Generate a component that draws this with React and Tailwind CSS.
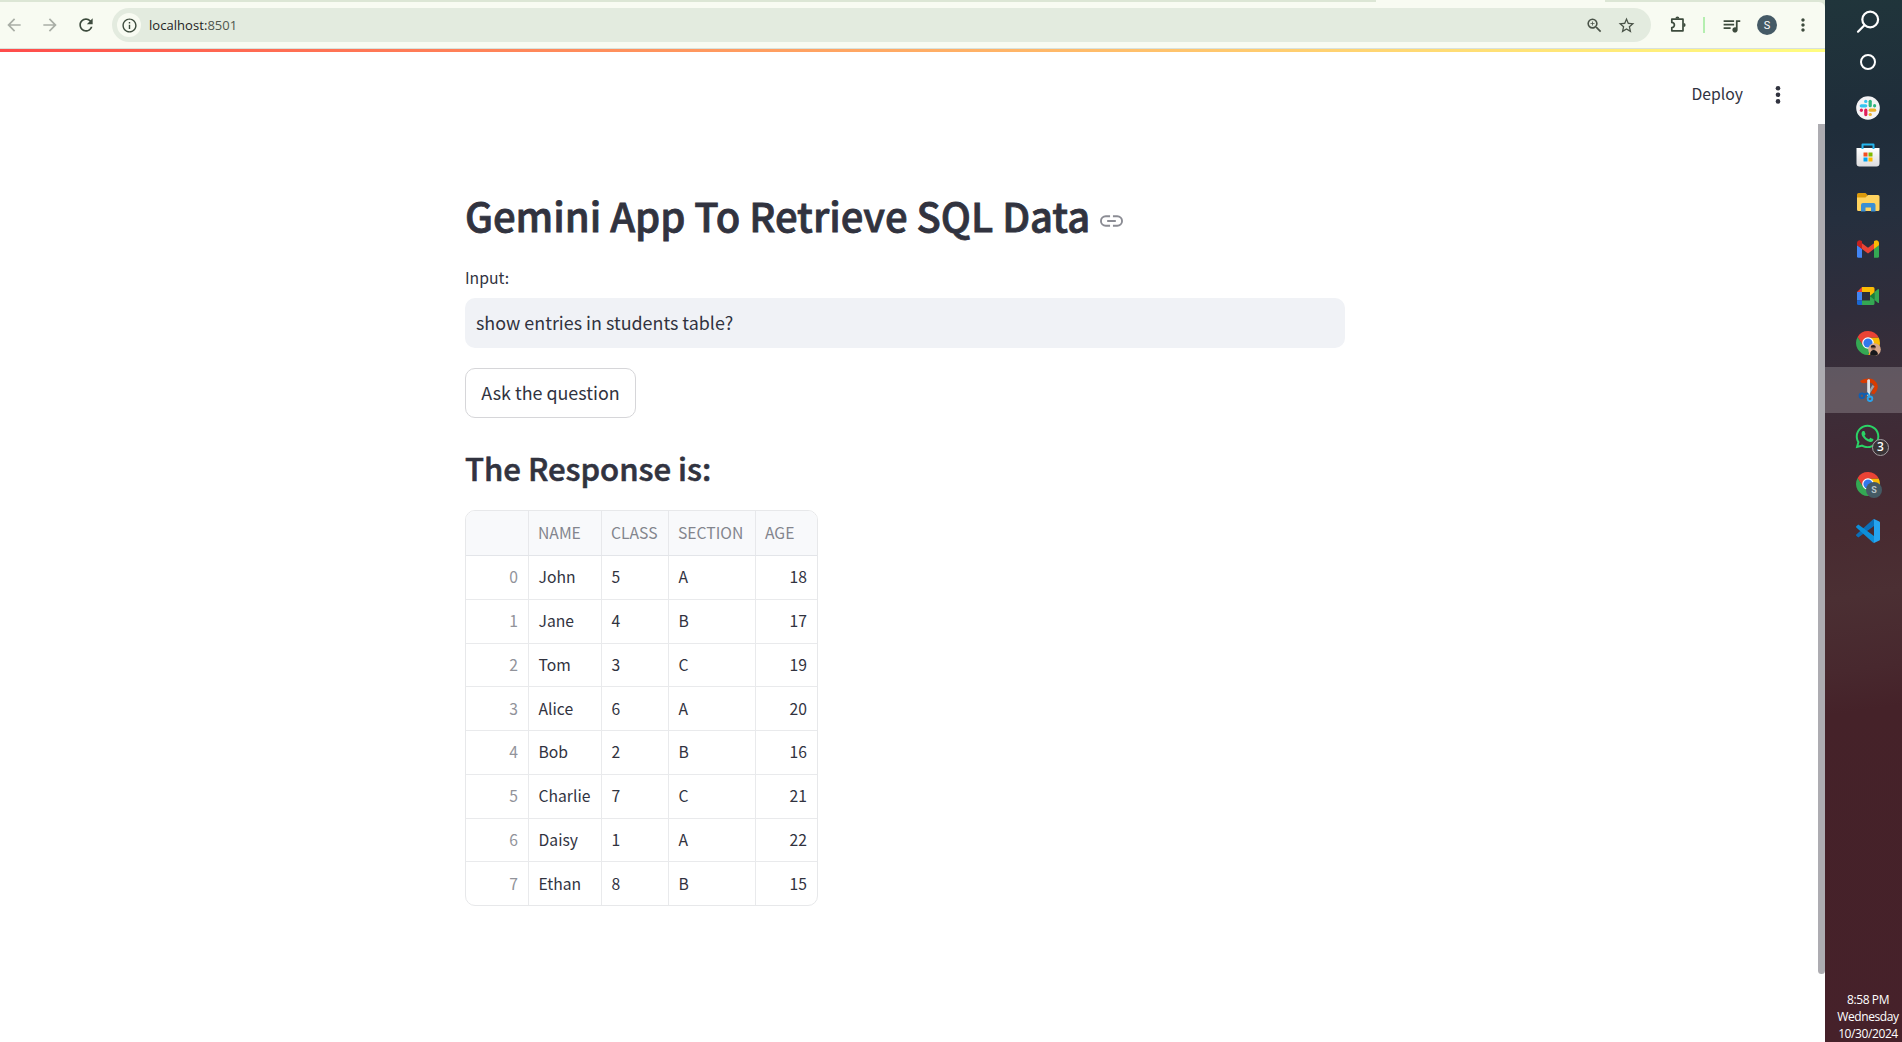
import {
  MdArrowBack,
  MdArrowForward,
  MdRefresh,
  MdInfoOutline,
  MdZoomIn,
  MdStarOutline,
  MdQueueMusic,
  MdMoreVert,
} from "react-icons/md";
import { FaWhatsapp } from "react-icons/fa";

const rows = [
  ["John", "5", "A", "18"],
  ["Jane", "4", "B", "17"],
  ["Tom", "3", "C", "19"],
  ["Alice", "6", "A", "20"],
  ["Bob", "2", "B", "16"],
  ["Charlie", "7", "C", "21"],
  ["Daisy", "1", "A", "22"],
  ["Ethan", "8", "B", "15"],
];

function Puzzle() {
  return (
    <svg className="ml-[17px] size-5" viewBox="0 0 20 20">
      <path
        d="M3.800 4.200H15V15.800H3.800V12.600a2.600 2.600 0 0 0 0-5.200z"
        fill="none"
        stroke="#3d4b3d"
        strokeWidth="1.700"
        strokeLinejoin="round"
      />
      <path d="M7.400 3.600a2 2 0 0 1 4 0zM15.600 8a2 2 0 0 1 0 4z" fill="#3d4b3d" />
    </svg>
  );
}

function BrowserBar() {
  return (
    <header className="h-[49px] shrink-0 bg-[#dce6d5] flex flex-col font-['Open_Sans',sans-serif]">
      <div className="h-[2px] flex justify-end pr-[220px]">
        <div className="w-[229px] bg-[#f8fbf2]" />
      </div>
      <div className="h-[46px] flex items-center bg-[#f8fbf2] rounded-tr-[6px] text-[#3d4b3d]">
        <div className="flex w-[112px] gap-4 pl-1">
          <MdArrowBack size={20} className="text-[#a9aea6]" />
          <MdArrowForward size={20} className="text-[#a9aea6]" />
          <MdRefresh size={20} />
        </div>
        <div className="h-[34px] w-[1539px] rounded-full bg-[#e3ebdf] flex items-center pl-[5px] pr-[15px]">
          <div className="size-6 rounded-full bg-[#f8fbf2] flex items-center justify-center">
            <MdInfoOutline size={17} />
          </div>
          <span className="ml-2 text-[13px] leading-[18px] tracking-[0.05px] text-[#1d221d]">
            localhost:<span className="text-[#4f574e]">8501</span>
          </span>
          <div className="ml-auto flex items-center gap-[13px]">
            <MdZoomIn size={19} className="text-[#4a5348]" />
            <MdStarOutline size={19} className="text-[#4a5348]" />
          </div>
        </div>
        <Puzzle />
        <div className="ml-[15px] h-4 w-[2px] bg-[#b5efb0]" />
        <MdQueueMusic size={21} className="ml-[16px]" />
        <div className="ml-[15px] size-5 rounded-full bg-[#455a66] text-white text-[11px] leading-none flex items-center justify-center font-['Roboto',sans-serif]">
          S
        </div>
        <MdMoreVert size={20} className="ml-4" />
      </div>
      <div className="h-px bg-[#d8e1dc]" />
    </header>
  );
}

function LinkIcon() {
  return (
    <svg className="ml-[10px] mt-[11px] h-[12px] w-[23px]" viewBox="0 0 24 12" fill="none" stroke="#8b8c94" strokeWidth="2" strokeLinecap="butt">
      <path d="M10.500 1H6a5 5 0 0 0 0 10h4.500M13.500 1H18a5 5 0 0 1 0 10h-4.500M7.500 6h9" />
    </svg>
  );
}

function DataTable() {
  const cols = "grid grid-cols-[63px_73px_67px_87px_61px]";
  return (
    <div className="mt-[20px] w-[353px] h-[396px] rounded-[10px] border border-[#e7e8ea] overflow-hidden text-[15.7px] leading-[22px] text-[#31333f]">
      <div className={cols + " h-[45px] bg-[#f8f9fb] border-b border-[#e3e5e9] text-[#83858d]"}>
        {["", "NAME", "CLASS", "SECTION", "AGE"].map((h, i) => (
          <div key={h} className={"flex items-center pl-[9px] pb-px whitespace-nowrap" + (i < 4 ? " border-r border-[#e7e8eb]" : "")}>
            {h}
          </div>
        ))}
      </div>
      {rows.map((r, i) => (
        <div key={r[0]} className={cols + " h-[43.75px] border-b border-[#e9eaec]"}>
          <div className="flex items-center justify-end pr-[10px] pb-[0.2px] border-r border-[#e9eaec] text-[#91939a]">{i}</div>
          {r.map((c, j) => (
            <div
              key={j}
              className={
                j === 3
                  ? "flex items-center justify-end pr-[10px] pb-[0.2px]"
                  : "flex items-center pl-[9.5px] pb-[0.2px] border-r border-[#e9eaec]"
              }
            >
              {c}
            </div>
          ))}
        </div>
      ))}
    </div>
  );
}

function Page() {
  return (
    <main className="relative flex-1 bg-white font-['Noto_Sans_CJK_SC',sans-serif] text-[#31333f]">
      <div className="h-[3px] bg-linear-to-r from-[#ff4b4b] to-[#fffd80]" />
      <div className="flex h-[84px] items-center justify-end pr-[40px]">
        <span className="text-[15.75px] leading-6">Deploy</span>
        <svg className="ml-[28px] mt-[2px] h-5 w-[14px]" viewBox="0 0 14 20" fill="#31333f">
          <circle cx="7" cy="3.200" r="2.300" />
          <circle cx="7" cy="9.800" r="2.300" />
          <circle cx="7" cy="16.400" r="2.300" />
        </svg>
      </div>
      <div className="ml-[465px] w-[880px] pt-[49px]">
        <div className="flex items-center h-[60px]">
          <h1 className="text-[40px] leading-[60px] font-medium [-webkit-text-stroke:0.8px_#31333f] tracking-[-0.03px] whitespace-nowrap">
            Gemini App To Retrieve SQL Data
          </h1>
          <LinkIcon />
        </div>
        <label className="mt-[21px] block text-[15.75px] leading-[24px]">Input:</label>
        <div className="mt-[8px] h-[50px] rounded-[10px] bg-[#f0f2f6] flex items-center px-[11px] pb-[3px] text-[17.9px] leading-7">
          show entries in students table?
        </div>
        <button className="mt-5 h-[50px] w-[171px] rounded-[10px] border border-[#d6d6d9] flex items-center justify-center pb-[3px] text-[17.9px] leading-7 whitespace-nowrap">
          Ask the question
        </button>
        <h2 className="mt-[28px] text-[31.1px] leading-[44px] font-medium [-webkit-text-stroke:0.6px_#31333f]">
          The Response is:
        </h2>
        <DataTable />
      </div>
      <div className="absolute right-0 top-[75px] h-[850px] w-[7px] rounded-b-[4px] bg-[#adacb1]" />
    </main>
  );
}

function Slack() {
  return (
    <svg className="size-6" viewBox="0 0 24 24">
      <circle cx="12" cy="12" r="11.800" fill="#f4f3f5" />
      <g strokeWidth="3.200" strokeLinecap="round">
        <path d="M5.300 9.800h4.400" stroke="#36c5f0" />
        <path d="M9.700 5.400h.1" stroke="#36c5f0" />
        <path d="M14.200 5.300v4.400" stroke="#2eb67d" />
        <path d="M18.600 9.700v.1" stroke="#2eb67d" />
        <path d="M14.200 14.200h4.400" stroke="#ecb22e" />
        <path d="M14.200 18.500h.1" stroke="#ecb22e" />
        <path d="M9.800 14.200v4.400" stroke="#e01e5a" />
        <path d="M5.400 14.200v.1" stroke="#e01e5a" />
      </g>
    </svg>
  );
}

function Store() {
  return (
    <svg className="size-6" viewBox="0 0 24 24">
      <defs>
        <linearGradient id="bag" x1="0" y1="0" x2="0" y2="1">
          <stop offset="0" stopColor="#ffffff" />
          <stop offset="1" stopColor="#dcdcde" />
        </linearGradient>
      </defs>
      <path d="M.5 5h23v15.500a3 3 0 0 1-3 3h-17a3 3 0 0 1-3-3z" fill="url(#bag)" />
      <path d="M6.500 6V1.500h11V6" fill="none" stroke="#25b5ee" strokeWidth="2" strokeLinejoin="round" />
      <path d="M7.500 9.500h4v4h-4z" fill="#f25022" />
      <path d="M12.500 9.500h4v4h-4z" fill="#7fba00" />
      <path d="M7.500 14.500h4v4h-4z" fill="#00a4ef" />
      <path d="M12.500 14.500h4v4h-4z" fill="#ffb900" />
    </svg>
  );
}

function Folder() {
  return (
    <svg className="size-6" viewBox="0 0 24 24">
      <path d="M1 4.500a1.500 1.500 0 0 1 1.500-1.500H9.500l2 2v4H1z" fill="#dc9a0c" />
      <path d="M1 7.500h8.500l2.500-2.500h10a1.500 1.500 0 0 1 1.500 1.500v13a1.500 1.500 0 0 1-1.500 1.500h-19.500a1.500 1.500 0 0 1-1.500-1.500z" fill="#ffd35f" />
      <path d="M5 21.500v-6.500a2 2 0 0 1 2-2h10.500a2 2 0 0 1 2 2v6.500h-4.500v-4h-5.500v4z" fill="#3b8fd4" />
    </svg>
  );
}

function Gmail() {
  return (
    <svg className="size-6" viewBox="0 0 24 24">
      <path d="M1 8l5 3.700v9H2.500a1.500 1.500 0 0 1-1.500-1.500z" fill="#4285f4" />
      <path d="M18 11.700L23 8v11.200a1.500 1.500 0 0 1-1.500 1.500H18z" fill="#34a853" />
      <path d="M6 6.200l6 4.500 6-4.500v5.700l-6 4.500-6-4.500z" fill="#ea4335" />
      <path d="M1 6c0-2.500 2.600-3.600 4.300-2.300l.7.500v7.700L1 8.200z" fill="#c5221f" />
      <path d="M23 6c0-2.500-2.600-3.600-4.300-2.300l-.7.500v7.700l5-3.700z" fill="#fbbc04" />
    </svg>
  );
}

function Meet() {
  return (
    <svg className="size-6" viewBox="0 0 24 24">
      <path d="M6 3L1 8h5z" fill="#ea4335" />
      <path d="M1 8h5v8.500H1z" fill="#4285f4" />
      <path d="M1 16.500h5V21H2.500a1.500 1.500 0 0 1-1.500-1.500z" fill="#1967d2" />
      <path d="M6 3h11a1.500 1.500 0 0 1 1.500 1.500V9L14 12V8H6z" fill="#fbbc04" />
      <path d="M6 16.500h8V12l4.500 3v4.500A1.500 1.500 0 0 1 17 21H6z" fill="#34a853" />
      <path d="M14 12l4.500-4v8z" fill="#188038" />
      <path d="M18.500 8l3.600-3c.4-.3.900 0 .9.500v13c0 .5-.5.800-.9.500L18.500 16z" fill="#34a853" />
    </svg>
  );
}

function Chrome({ children }) {
  return (
    <div className="relative size-6">
      <svg className="size-6" viewBox="0 0 24 24">
        <path d="M12 6.500h10.650A12 12 0 0 1 12 24l4.760-9.250z" fill="#fbbc04" />
        <path d="M7.240 14.750L1.608 6A12 12 0 0 0 12 24l4.760-9.250z" fill="#34a853" />
        <path d="M1.608 6A12 12 0 0 1 22.650 6.500H12L7.240 14.750z" fill="#ea4335" />
        <circle cx="12" cy="12" r="5.800" fill="#fff" />
        <circle cx="12" cy="12" r="4.600" fill="#3278ec" />
      </svg>
      {children}
    </div>
  );
}

function Portrait() {
  return (
    <svg className="absolute left-[12px] top-[12px] size-[13px]" viewBox="0 0 13 13">
      <circle cx="6.500" cy="6.500" r="6.300" fill="#d9a98c" />
      <path d="M2 11.500c.3-3.400 2-4.500 3.500-4.500s4 1 4.500 4.300c-2 1.900-5.500 2.200-8 .2z" fill="#17181c" />
      <circle cx="5.300" cy="4.800" r="2.300" fill="#a87862" />
      <path d="M2.800 4.500c-.3-3 4.800-3.400 5 0z" fill="#211a1c" />
    </svg>
  );
}

function Snip() {
  return (
    <svg className="size-6" viewBox="0 0 24 24">
      <path d="M4 3.200C8 .2 15-.4 18.500 2.500c4.500 3.800 4.300 9-.2 13.800L15 15.200l1.500-3.200c2-2.600 1.500-5.200-.5-6.800C12.500 3.500 9 6 5.500 4.800z" fill="#d83b01" />
      <path d="M16.500 7l2 1.200-5.800 9-1.700-1z" fill="#9ea3a8" />
      <path d="M11.200 2l1.800-1 1 1v15l-2.800 1z" fill="#dfe3e6" />
      <path d="M12 15.500l2 4" stroke="#2aa4ee" strokeWidth="1.800" />
      <circle cx="5.900" cy="17.800" r="2.300" fill="none" stroke="#0f5fb4" strokeWidth="1.900" />
      <path d="M8 16.600l4-1.400" stroke="#0f5fb4" strokeWidth="2" />
      <circle cx="14" cy="20.800" r="2.300" fill="none" stroke="#2aa4ee" strokeWidth="1.900" />
    </svg>
  );
}

function WhatsApp() {
  return (
    <div className="relative size-6">
      <FaWhatsapp className="-ml-[2px] -mt-[2px] text-[#2bd366]" size={27} />
      <div className="absolute left-[16px] top-[13.5px] size-[17px] rounded-full border border-[#a59ea3] bg-[#3a3437] text-white text-[12px] leading-none flex items-center justify-center font-['Open_Sans',sans-serif] font-semibold">
        3
      </div>
    </div>
  );
}

function VsCode() {
  return (
    <svg className="size-6" viewBox="0 0 24 24">
      <path d="M18 7L2.300 18.600.3 16.700a.8.8 0 0 1 0-1.200L17.200.2 18 1z" fill="#0b6fb8" />
      <path d="M18 17L2.300 5.400.3 7.300a.8.8 0 0 0 0 1.200L17.200 23.800 18 23z" fill="#0d8fd9" />
      <path d="M17.200.2L18 0l5.300 2.400c.4.200.7.600.7 1.100v17c0 .5-.3.900-.7 1.100L18 24l-.8-.2c.5-.2.800-.6.800-1.200V1.400c0-.6-.3-1-.8-1.200z" fill="#25a4f0" />
    </svg>
  );
}

function Taskbar() {
  const apps = [
    <Slack />,
    <Store />,
    <Folder />,
    <Gmail />,
    <Meet />,
    <Chrome>
      <Portrait />
    </Chrome>,
    <Snip />,
    <WhatsApp />,
    <Chrome>
      <div className="absolute left-[10px] top-[10px] size-4 rounded-full bg-[#455a64] text-[#b9c5cb] text-[9px] leading-none font-bold flex items-center justify-center font-['Roboto',sans-serif]">
        S
      </div>
    </Chrome>,
    <VsCode />,
  ];
  return (
    <aside className="w-[77px] shrink-0 flex flex-col bg-[linear-gradient(172deg,#20353b_0%,#1f2d3a_12%,#252f3e_21%,#302d3b_30%,#3b2e39_37%,#402a35_43%,#482b31_51%,#4b2f33_57%,#48282e_64%,#452229_68%,#46212a_100%)] text-white">
      <div className="flex h-[84.5px] flex-col items-center pl-[9px]">
        <svg className="mt-[10px] size-6 shrink-0" viewBox="0 0 24 24" fill="none" stroke="#fff" strokeWidth="2.200" strokeLinecap="round">
          <circle cx="14.200" cy="9.500" r="7.900" />
          <path d="M8.400 15.200L2 21.700" />
        </svg>
        <div className="mt-[20px] size-4 shrink-0 rounded-full border-[2.500px] border-white" />
      </div>
      {apps.map((a, i) => (
        <div
          key={i}
          className={
            i === 6
              ? "my-[0.5px] flex h-[46px] shrink-0 items-center justify-center pl-[9px] bg-white/20"
              : "flex h-[47px] shrink-0 items-center justify-center pl-[9px]"
          }
        >
          {a}
        </div>
      ))}
      <div className="mt-auto pl-[9px] text-center text-[12px] leading-[17px] tracking-[-0.4px] font-['Open_Sans',sans-serif]">
        <div>8:58 PM</div>
        <div>Wednesday</div>
        <div>10/30/2024</div>
      </div>
    </aside>
  );
}

export default function App() {
  return (
    <div className="flex h-[1042px] w-[1902px] overflow-hidden bg-white">
      <div className="flex w-[1825px] flex-col">
        <BrowserBar />
        <Page />
      </div>
      <Taskbar />
    </div>
  );
}
